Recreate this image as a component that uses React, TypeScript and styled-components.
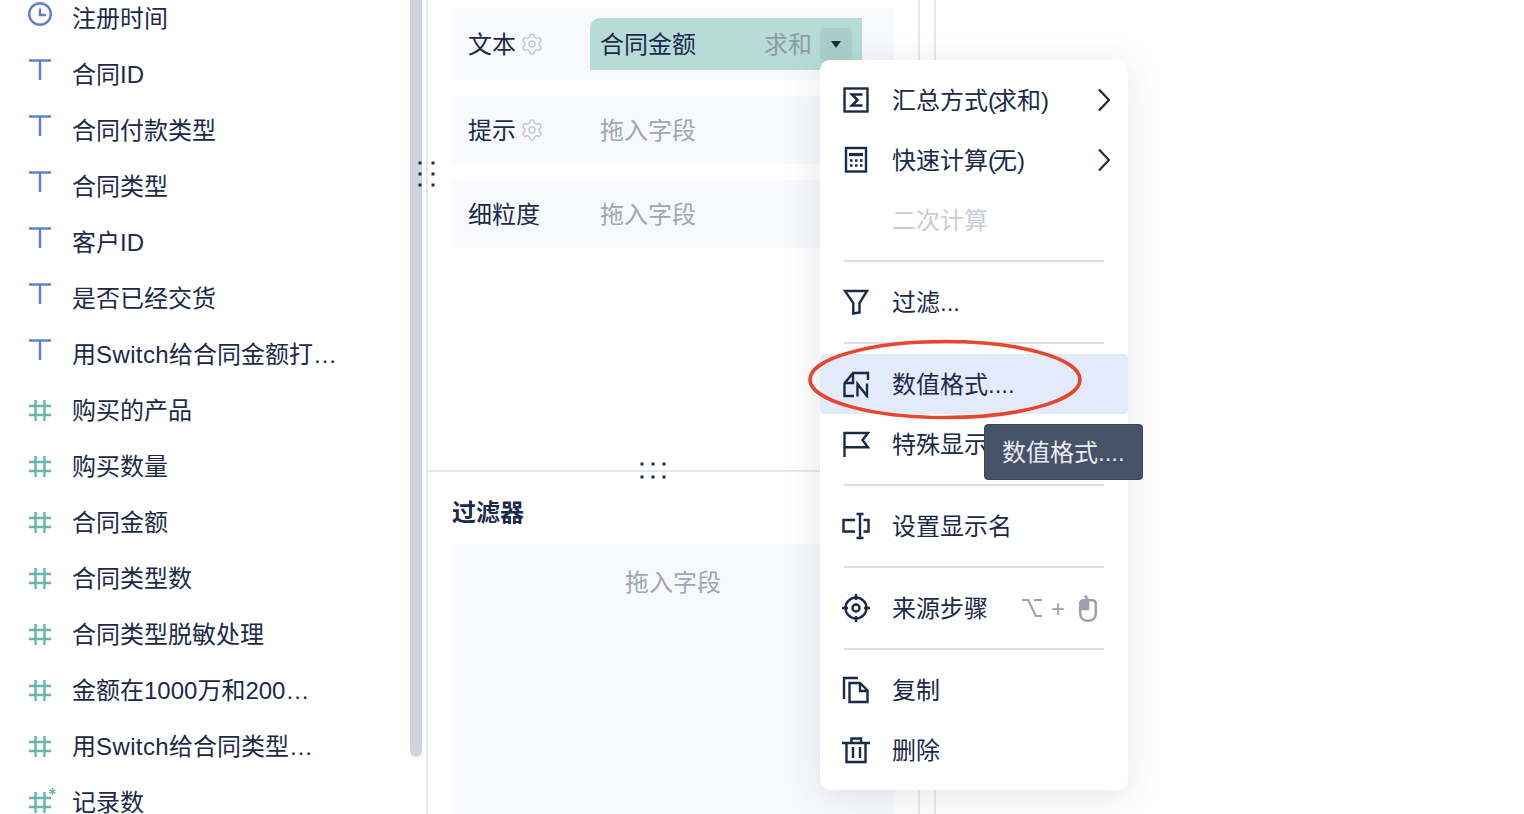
import React from 'react';
import styled, { createGlobalStyle } from 'styled-components';
import { Settings } from 'lucide-react';

const ink = '#1b2a4a';
const line = '#e6e7ee';
const soft = '#f8f9fd';

const GlobalStyle = createGlobalStyle`
  html, body {
    margin: 0;
    padding: 0;
    background: #fff;
  }
  body {
    font-family: "Liberation Sans", "Noto Sans CJK SC", sans-serif;
    color: ${ink};
  }
`;

const Page = styled.div`
  position: relative;
  width: 1524px;
  height: 814px;
  overflow: hidden;
  display: flex;
  background: #fff;
`;

// Left field list
const FieldPanel = styled.aside`
  width: 428px;
  height: 814px;
  flex: none;
  box-sizing: border-box;
  display: flex;
  border-right: 2px solid ${line};
  overflow: hidden;
`;

const FieldList = styled.ul`
  flex: 1;
  list-style: none;
  margin: -9px 0 0;
  padding: 0;
`;

const FieldRow = styled.li`
  height: 56px;
  display: flex;
  align-items: center;
  gap: 20px;
  padding-left: 28px;
  font-size: 24px;
  line-height: 32px;
  white-space: nowrap;
`;

const Latin = styled.span`
  letter-spacing: 0.4px;
`;

const Scrollbar = styled.div`
  width: 12px;
  height: 757px;
  flex: none;
  margin-right: 4px;
  background: #d0d3dc;
  border-radius: 0 0 6px 6px;
`;

const FieldGlyph = styled.svg<{ $tone: string }>`
  width: 24px;
  height: 32px;
  flex: none;
  overflow: visible;
  fill: none;
  stroke: ${props => props.$tone};
  stroke-width: 2.4;
`;

// Middle config panel
const ConfigPanel = styled.main`
  width: 492px;
  height: 814px;
  flex: none;
  box-sizing: border-box;
  display: flex;
  flex-direction: column;
  border-right: 2px solid ${line};
`;

const Shelves = styled.section`
  height: 472px;
  flex: none;
  box-sizing: border-box;
  padding: 8px 24px 0;
  border-bottom: 2px solid ${line};
  display: flex;
  flex-direction: column;
  gap: 16px;
`;

const Shelf = styled.div<{ $tall?: boolean }>`
  height: ${props => (props.$tall ? '72px' : '68px')};
  flex: none;
  display: flex;
  align-items: center;
  padding-left: 16px;
  background: ${soft};
  font-size: 24px;
  line-height: 32px;
`;

const ShelfLabel = styled.div`
  width: 122px;
  flex: none;
  display: flex;
  align-items: center;
  gap: 4px;
  color: #c4c8d2;
`;

const LabelText = styled.span`
  padding-top: 2px;
  color: ${ink};
`;

const Placeholder = styled.span`
  padding: 2px 0 0 10px;
  color: #a0a7b5;
`;

const Pill = styled.div`
  width: 272px;
  height: 52px;
  flex: none;
  display: flex;
  align-items: center;
  padding: 0 10px;
  box-sizing: border-box;
  background: #b7dcd7;
  border-radius: 10px 0 0 0;
`;

const PillName = styled.span`
  padding-top: 2px;
`;

const PillAggregate = styled.span`
  margin-left: auto;
  margin-right: 8px;
  padding-top: 2px;
  color: #8d9aa6;
`;

const PillCaret = styled.div`
  width: 32px;
  height: 32px;
  flex: none;
  display: flex;
  align-items: center;
  justify-content: center;
  background: #a8cfcb;
  border-radius: 4px;
`;

const Caret = styled.div`
  width: 0;
  height: 0;
  border-left: 5.5px solid transparent;
  border-right: 5.5px solid transparent;
  border-top: 7px solid ${ink};
`;

const FilterSection = styled.section`
  flex: 1;
  min-height: 0;
  display: flex;
  flex-direction: column;
  padding: 25px 24px 0;
`;

const FilterTitle = styled.h3`
  margin: 0 0 15px;
  font-size: 24px;
  line-height: 32px;
  font-weight: 700;
`;

const FilterDrop = styled.div`
  flex: 1;
  padding-top: 23px;
  background: ${soft};
  color: #a0a7b5;
  font-size: 24px;
  line-height: 32px;
  text-align: center;
`;

const Gutter = styled.div`
  width: 16px;
  height: 814px;
  flex: none;
  box-sizing: border-box;
  border-right: 2px solid ${line};
`;

// Context menu overlay
const Menu = styled.div`
  position: absolute;
  left: 820px;
  top: 60px;
  width: 308px;
  padding: 10px 0;
  box-sizing: border-box;
  background: #fff;
  border-radius: 10px;
  box-shadow: 0 6px 36px rgba(40, 50, 90, 0.12);
`;

const MenuItem = styled.div<{ $active?: boolean; $disabled?: boolean }>`
  height: 60px;
  display: flex;
  align-items: center;
  gap: 22px;
  padding: 0 18px 0 22px;
  font-size: 24px;
  line-height: 32px;
  white-space: nowrap;
  border-radius: 4px;
  background: ${props => (props.$active ? '#e3ebfb' : 'transparent')};
  color: ${props => (props.$disabled ? '#c9cdd6' : ink)};
`;

const MenuLabel = styled.span`
  padding-top: 2px;
`;

const Paren = styled.span`
  letter-spacing: -3px;
`;

const MenuIcon = styled.svg`
  width: 28px;
  height: 28px;
  flex: none;
  fill: none;
  stroke: ${ink};
  stroke-width: 2.4;
`;

const IconSpacer = styled.div`
  width: 28px;
  flex: none;
`;

const Chevron = styled.svg`
  width: 12px;
  height: 24px;
  margin-left: auto;
  flex: none;
  fill: none;
  stroke: ${ink};
  stroke-width: 2.2;
`;

const MenuDivider = styled.hr`
  height: 2px;
  margin: 10px 24px;
  border: 0;
  background: #dfe0e7;
`;

const Shortcut = styled.div`
  margin-left: auto;
  margin-right: 13px;
  display: flex;
  align-items: center;
  color: #9ba1af;
  font-size: 24px;
`;

const ShortcutPlus = styled.span`
  margin: 2px 14px 0 9px;
`;

const Tooltip = styled.div`
  position: absolute;
  left: 164px;
  top: 364px;
  width: 159px;
  height: 56px;
  display: flex;
  align-items: center;
  padding: 2px 0 0 17px;
  box-sizing: border-box;
  background: #465268;
  border: 1px solid #38445a;
  border-radius: 4px;
  color: #e9ecf2;
  font-size: 24px;
  line-height: 32px;
  white-space: nowrap;
`;

const Annotation = styled.svg`
  position: absolute;
  left: -14px;
  top: 277px;
  width: 278px;
  height: 85px;
  fill: none;
  stroke: #e8452c;
  stroke-width: 3.6;
  pointer-events: none;
`;

const DragDots = styled.svg<{ $left: number; $top: number }>`
  position: absolute;
  left: ${props => props.$left}px;
  top: ${props => props.$top}px;
  fill: ${ink};
`;

const ClockIcon = () => (
  <FieldGlyph $tone="#5f80cc" viewBox="0 0 24 32">
    <circle cx="12" cy="11" r="10.8" />
    <path d="M12 5.500V12H18" />
  </FieldGlyph>
);

const TextIcon = () => (
  <FieldGlyph $tone="#5f80cc" viewBox="0 0 24 32">
    <path d="M1 1.500H23M12 1.500V21" />
  </FieldGlyph>
);

const NumberIcon = ({ starred }: { starred?: boolean }) => (
  <FieldGlyph $tone="#69b7a9" viewBox="0 0 24 32">
    <path d="M1 11H23M1 20H23M7.500 5V26M16.500 5V26" />
    {starred && (
      <path d="M24.500 1V8M21.500 2.800L27.500 6.200M27.500 2.800L21.500 6.200" strokeWidth="1.5" />
    )}
  </FieldGlyph>
);

const fields: { name: React.ReactNode; kind: 'date' | 'text' | 'number' | 'calc' }[] = [
  { name: '注册时间', kind: 'date' },
  { name: '合同ID', kind: 'text' },
  { name: '合同付款类型', kind: 'text' },
  { name: '合同类型', kind: 'text' },
  { name: '客户ID', kind: 'text' },
  { name: '是否已经交货', kind: 'text' },
  { name: <>用<Latin>Switch</Latin>给合同金额打…</>, kind: 'text' },
  { name: '购买的产品', kind: 'number' },
  { name: '购买数量', kind: 'number' },
  { name: '合同金额', kind: 'number' },
  { name: '合同类型数', kind: 'number' },
  { name: '合同类型脱敏处理', kind: 'number' },
  { name: '金额在1000万和200…', kind: 'number' },
  { name: <>用<Latin>Switch</Latin>给合同类型…</>, kind: 'number' },
  { name: '记录数', kind: 'calc' },
];

const renderFieldIcon = (kind: string) => {
  if (kind === 'date') return <ClockIcon />;
  if (kind === 'text') return <TextIcon />;
  return <NumberIcon starred={kind === 'calc'} />;
};

const ArrowRight = () => (
  <Chevron viewBox="0 0 12 24">
    <path d="M1 1.500L11 12L1 22.500" />
  </Chevron>
);

export default function App() {
  return (
    <Page>
      <GlobalStyle />
      <FieldPanel>
        <FieldList>
          {fields.map((field, index) => (
            <FieldRow key={index}>
              {renderFieldIcon(field.kind)}
              <span>{field.name}</span>
            </FieldRow>
          ))}
        </FieldList>
        <Scrollbar />
      </FieldPanel>

      <ConfigPanel>
        <Shelves>
          <Shelf $tall>
            <ShelfLabel>
              <LabelText>文本</LabelText>
              <Settings size={24} strokeWidth={1.5} />
            </ShelfLabel>
            <Pill>
              <PillName>合同金额</PillName>
              <PillAggregate>求和</PillAggregate>
              <PillCaret>
                <Caret />
              </PillCaret>
            </Pill>
          </Shelf>
          <Shelf>
            <ShelfLabel>
              <LabelText>提示</LabelText>
              <Settings size={24} strokeWidth={1.5} />
            </ShelfLabel>
            <Placeholder>拖入字段</Placeholder>
          </Shelf>
          <Shelf>
            <ShelfLabel>
              <LabelText>细粒度</LabelText>
            </ShelfLabel>
            <Placeholder>拖入字段</Placeholder>
          </Shelf>
        </Shelves>
        <FilterSection>
          <FilterTitle>过滤器</FilterTitle>
          <FilterDrop>拖入字段</FilterDrop>
        </FilterSection>
      </ConfigPanel>
      <Gutter />

      <DragDots $left={418} $top={161} width="18" height="27" viewBox="0 0 18 27">
        <rect x="0.5" y="0.5" width="3" height="3" />
        <rect x="13.5" y="0.5" width="3" height="3" />
        <rect x="0.5" y="11.5" width="3" height="3" />
        <rect x="13.5" y="11.5" width="3" height="3" />
        <rect x="0.5" y="22.5" width="3" height="3" />
        <rect x="13.5" y="22.5" width="3" height="3" />
      </DragDots>
      <DragDots $left={640} $top={462} width="27" height="18" viewBox="0 0 27 18">
        <rect x="0.5" y="0.5" width="3" height="3" />
        <rect x="11.5" y="0.5" width="3" height="3" />
        <rect x="22.5" y="0.5" width="3" height="3" />
        <rect x="0.5" y="13.5" width="3" height="3" />
        <rect x="11.5" y="13.5" width="3" height="3" />
        <rect x="22.5" y="13.5" width="3" height="3" />
      </DragDots>

      <Menu>
        <MenuItem>
          <MenuIcon viewBox="0 0 28 28">
            <rect x="2.500" y="2.500" width="23" height="23" />
            <path d="M20.500 8.500H10L15.500 14L10 19.500H20.500" strokeWidth="2.600" />
          </MenuIcon>
          <MenuLabel>汇总方式<Paren>(</Paren>求和<Paren>)</Paren></MenuLabel>
          <ArrowRight />
        </MenuItem>
        <MenuItem>
          <MenuIcon viewBox="0 0 28 28">
            <rect x="4" y="2" width="20" height="23.500" />
            <path d="M7 8.500H21" strokeWidth="3.200" />
            <path d="M8 14.500H10.500M13 14.500H15.500M18 14.500H20.500M8 19.500H10.500M13 19.500H15.500M18 19.500H20.500" />
          </MenuIcon>
          <MenuLabel>快速计算<Paren>(</Paren>无<Paren>)</Paren></MenuLabel>
          <ArrowRight />
        </MenuItem>
        <MenuItem $disabled>
          <IconSpacer />
          <MenuLabel>二次计算</MenuLabel>
        </MenuItem>
        <MenuDivider />
        <MenuItem>
          <MenuIcon viewBox="0 0 28 28">
            <path d="M3 3H25L17.500 15V24.500L11.300 25.500V15Z" />
          </MenuIcon>
          <MenuLabel>过滤...</MenuLabel>
        </MenuItem>
        <MenuDivider />
        <MenuItem $active>
          <MenuIcon viewBox="0 0 28 28">
            <path d="M12 26H2.500V13.500L11 3H26V10M11 3V13H2.500" />
            <path d="M15.500 26.500V14L25 26V13.500" />
          </MenuIcon>
          <MenuLabel>数值格式....</MenuLabel>
        </MenuItem>
        <MenuItem>
          <MenuIcon viewBox="0 0 28 28">
            <path d="M2.500 27V3H26L20.500 10L26 17.300H2.500" />
          </MenuIcon>
          <MenuLabel>特殊显示</MenuLabel>
        </MenuItem>
        <MenuDivider />
        <MenuItem>
          <MenuIcon viewBox="0 0 28 28">
            <path d="M13 8H1.500V19.500H13M21.500 8H26.500V19.500H21.500M14.500 2H21.500M18 2V26M14.500 26H21.500" />
          </MenuIcon>
          <MenuLabel>设置显示名</MenuLabel>
        </MenuItem>
        <MenuDivider />
        <MenuItem>
          <MenuIcon viewBox="0 0 28 28">
            <circle cx="14" cy="14" r="10.500" />
            <circle cx="14" cy="14" r="3.500" />
            <path d="M14 0V6M14 22V28M0 14H6M22 14H28" />
          </MenuIcon>
          <MenuLabel>来源步骤</MenuLabel>
          <Shortcut>
            <svg width="20" height="18" viewBox="0 0 20 18" fill="none" stroke="#9ba1af" strokeWidth="2">
              <path d="M0 1H6L14 17H20M12 1H20" />
            </svg>
            <ShortcutPlus>+</ShortcutPlus>
            <svg width="18" height="27" viewBox="0 0 18 27" fill="none" stroke="#9ba1af" strokeWidth="2.500">
              <path d="M1 6H9V14H1Z" fill="#9ba1af" stroke="none" />
              <path d="M1.200 9C1.200 6.500 3 5.200 5 5.200H13C15.500 5.200 16.800 6.500 16.800 9V18C16.800 23 13.500 25.800 9 25.800C4.500 25.800 1.200 23 1.200 18Z" />
              <path d="M9 5V14H1M6 0.500L9 5" />
            </svg>
          </Shortcut>
        </MenuItem>
        <MenuDivider />
        <MenuItem>
          <MenuIcon viewBox="0 0 28 28">
            <path d="M2 23V2H16" />
            <path d="M7.500 7H18L25.500 14.500V26H7.500Z" />
            <path d="M18 7V15H25.500" />
          </MenuIcon>
          <MenuLabel>复制</MenuLabel>
        </MenuItem>
        <MenuItem>
          <MenuIcon viewBox="0 0 28 28">
            <path d="M0 7H28M9.500 7V2.500H19V7M4.500 7V26H23.500V7M11 11V22M18 11V22" />
          </MenuIcon>
          <MenuLabel>删除</MenuLabel>
        </MenuItem>
        <Tooltip>数值格式....</Tooltip>
        <Annotation viewBox="0 0 278 85">
          <ellipse cx="139" cy="42.500" rx="135" ry="38" />
        </Annotation>
      </Menu>
    </Page>
  );
}
